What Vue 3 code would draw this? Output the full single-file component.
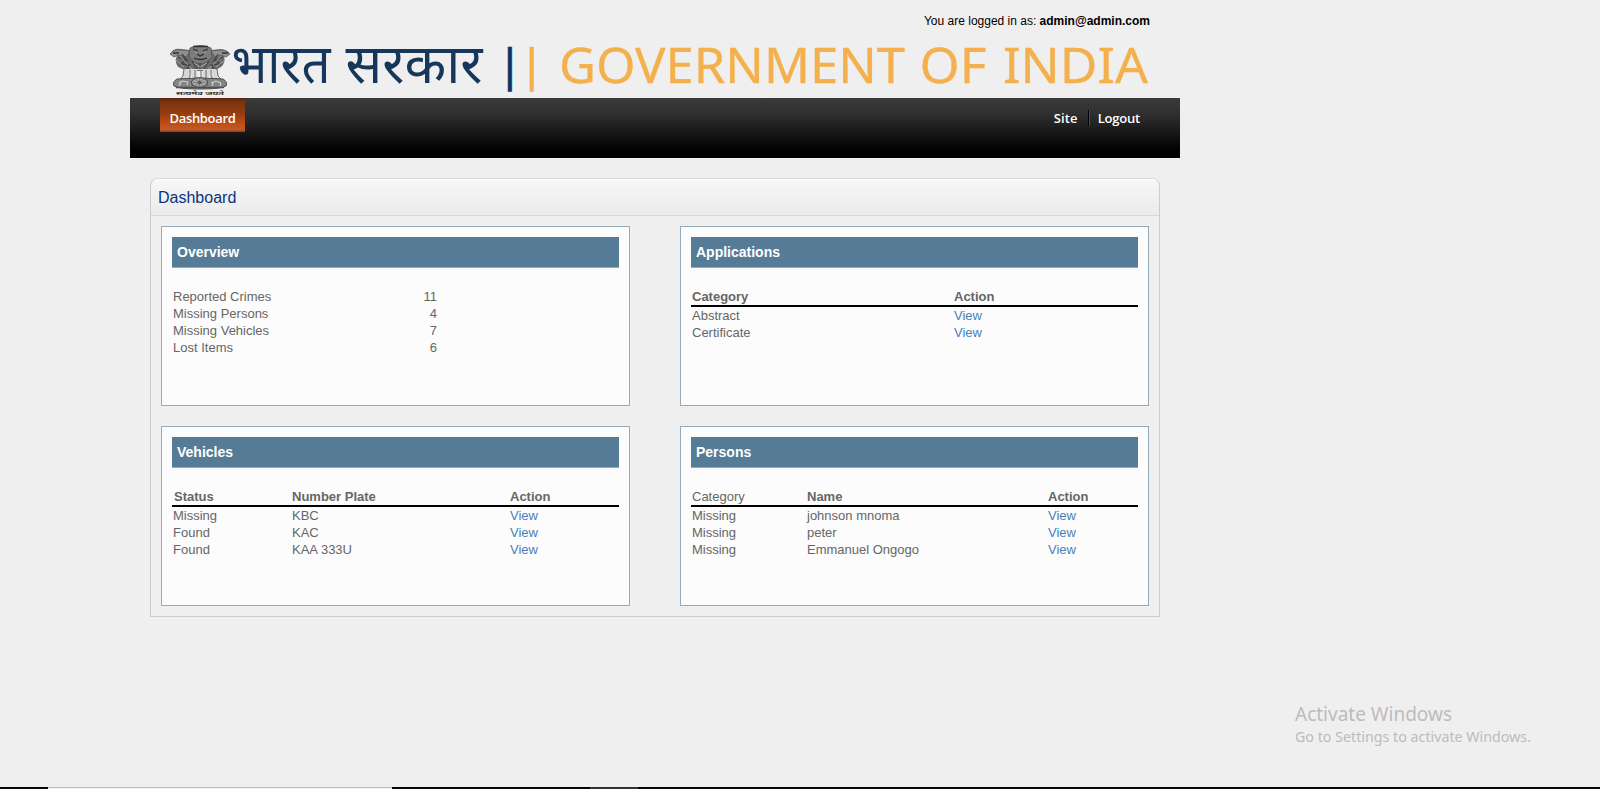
<script setup>
const cards = [
  {
    title: 'Overview',
    cols: [160, 106],
    width: 266,
    head: null,
    counts: true,
    rows: [
      ['Reported Crimes', '11'],
      ['Missing Persons', '4'],
      ['Missing Vehicles', '7'],
      ['Lost Items', '6'],
    ],
  },
  {
    title: 'Applications',
    cols: [262, 185],
    width: 447,
    head: ['Category', 'Action'],
    rows: [
      ['Abstract', 'View'],
      ['Certificate', 'View'],
    ],
  },
  {
    title: 'Vehicles',
    cols: [119, 218, 110],
    width: 447,
    head: [' Status', 'Number Plate', 'Action'],
    rows: [
      ['Missing', 'KBC', 'View'],
      ['Found', 'KAC', 'View'],
      ['Found', 'KAA 333U', 'View'],
    ],
  },
  {
    title: 'Persons',
    cols: [115, 241, 91],
    width: 447,
    head: ['Category', 'Name', 'Action'],
    lightFirst: true,
    rows: [
      ['Missing', 'johnson mnoma', 'View'],
      ['Missing', 'peter', 'View'],
      ['Missing', 'Emmanuel Ongogo', 'View'],
    ],
  },
]
</script>

<template>
  <div class="page">
    <div class="wrap">
      <header class="top">
        <p class="login">You are logged in as: <b>admin@admin.com</b></p>
        <svg class="banner" width="1050" height="60" viewBox="130 38 1050 60">
          <!-- Lion capital -->
          <g>
            <path d="M170 54 Q173 48 181 49 L190 50 Q192 45 200 46 Q209 45 211 50 L221 49 Q228 50 230 54 L224 56 Q226 63 221 67 L214 71 L187 71 L178 67 Q174 61 177 56Z" fill="#6c6c6c" />
            <path d="M170 54 Q174 49 181 50 L190 51 L186 57 L179 55 L174 57Z M230 54 Q226 49 220 50 L211 51 L215 57 L221 55 L226 57Z" fill="#909090" stroke="#5a5a5a" stroke-width=".8" />
            <path d="M190 48 Q200 43 211 48 L212 57 Q206 64 200 64 Q193 63 189 57Z" fill="#7c7c7c" stroke="#505050" stroke-width=".8" />
            <path d="M193 46.500 H208 M193 49 L198 51 M203 51 L208 49 M197 54 L200 56 L204 54 M194 58 Q200 61 207 58 M173 53 L179 53 M222 53 L228 53" fill="none" stroke="#303030" stroke-width="1.3" />
            <path d="M178 57 L186 60 L181 64 L190 65 L186 70 M223 57 L215 60 L220 64 L211 65 L215 70 M192 61 L197 69 M209 61 L204 69 M200 63 V70 M182 54 L188 62 M218 54 L213 62" fill="none" stroke="#444" stroke-width="1.3" />
            <path d="M180 56 L188 65 M176 60 L184 67 M221 56 L213 65 M225 60 L216 67 M194 63 L200 67 L207 63 M189 66 L193 70 M212 66 L207 70 M195 52 L197 53 M204 53 L206 52" fill="none" stroke="#a8a8a8" stroke-width=".9" />
            <path d="M184 69 L182 79 H189 L190 70 L193 80 H198 L197 70 L203 70 L202 80 H208 L211 70 L212 79 H219 L216 69Z" fill="#d8d8d8" />
            <path d="M184 69 L183 76 L180 79 H187 M190 70 V77 L188 79 M195 70 V78 L192 80 H198 M201 70 V79 M206 70 V78 L209 80 H203 M211 70 V77 L214 79 M217 69 L218 76 L221 79 H214" fill="none" stroke="#6a6a6a" stroke-width="1" />
            <path d="M177 79 Q200 77 223 79 Q228 82 226 86 Q222 89 200 89 Q179 89 174 86 Q172 82 177 79Z" fill="#858585" stroke="#505050" stroke-width="1" />
            <ellipse cx="199.500" cy="82.500" rx="8" ry="4.800" fill="#a6a6a6" stroke="#4a4a4a" stroke-width="1.1" />
            <circle cx="199.500" cy="82.500" r="1.800" fill="#444" />
            <path d="M193 82.500 H206 M199.500 78 V87 M195 79 L204 86 M204 79 L195 86" stroke="#666" stroke-width=".6" />
            <path d="M179 83 L182 81 L188 82 M179 86 L181 83 M187 85 L188 82 M211 83 L216 81 L221 83 M212 86 L213 83 M220 86 L221 83" fill="none" stroke="#d0d0d0" stroke-width="1.1" />
            <path d="M176 87.500 H224" stroke="#505050" stroke-width="1.3" />
            <text class="motto" x="176" y="94.500" textLength="48" lengthAdjust="spacingAndGlyphs">सत्यमेव जयते</text>
          </g>
          <g class="hindi">
            <text x="231.500" y="82.500" textLength="99" lengthAdjust="spacingAndGlyphs">भारत</text>
            <text x="345.500" y="82.500" textLength="137" lengthAdjust="spacingAndGlyphs">सरकार</text>
          </g>
          <text class="bar navy" x="502.300" y="81">|</text>
          <text class="bar amber" x="524.300" y="81">|</text>
          <g class="latin">
            <text x="559" y="83" textLength="346" lengthAdjust="spacingAndGlyphs">GOVERNMENT</text>
            <text x="919.500" y="83" textLength="67" lengthAdjust="spacingAndGlyphs">OF</text>
            <text x="1003" y="83" textLength="145" lengthAdjust="spacingAndGlyphs">INDIA</text>
          </g>
        </svg>
      </header>

      <nav class="nav">
        <a class="tab">Dashboard</a>
        <div class="links">
          <a class="link site">Site</a>
          <i class="sep"></i>
          <a class="link">Logout</a>
        </div>
      </nav>

      <main class="panel">
        <h1 class="title">Dashboard</h1>
        <div class="grid">
          <section v-for="card in cards" :key="card.title" class="card">
            <h2 class="caption">{{ card.title }}</h2>
            <table class="table" :style="{ width: card.width + 'px' }">
              <colgroup>
                <col v-for="(w, i) in card.cols" :key="i" :style="{ width: w + 'px' }" />
              </colgroup>
              <thead v-if="card.head">
                <tr>
                  <th
                    v-for="(h, i) in card.head"
                    :key="h"
                    :class="{ light: card.lightFirst && i === 0, indent: h.startsWith(' ') }"
                  >{{ h.trim() }}</th>
                </tr>
              </thead>
              <tbody>
                <tr v-for="(row, r) in card.rows" :key="r">
                  <td v-for="(cell, c) in row" :key="c" :class="{ num: card.counts && c === 1 }">
                    <a v-if="cell === 'View'" class="view">{{ cell }}</a>
                    <template v-else>{{ cell }}</template>
                  </td>
                </tr>
              </tbody>
            </table>
          </section>
        </div>
      </main>
    </div>

    <svg class="activate" width="260" height="60" viewBox="1290 695 260 60">
      <text class="big" x="1295" y="721" textLength="157" lengthAdjust="spacingAndGlyphs">Activate Windows</text>
      <text class="small" x="1295" y="742" textLength="236" lengthAdjust="spacingAndGlyphs">Go to Settings to activate Windows.</text>
    </svg>

    <div class="taskbar">
      <i class="active"></i>
      <i class="hover"></i>
    </div>
  </div>
</template>

<style>
body {
  background: #efefef;
}
</style>

<style scoped>
.page {
  position: relative;
  box-sizing: border-box;
  height: 789px;
  display: flex;
  flex-direction: column;
  justify-content: space-between;
  background: #efefef;
  font-family: "Liberation Sans", Arial, sans-serif;
  color: #666;
}
.wrap {
  width: 1050px;
  margin-left: 130px;
}
.top {
  height: 98px;
}
.login {
  box-sizing: border-box;
  height: 38px;
  margin: 0;
  padding: 14px 30px 0 0;
  text-align: right;
  font-size: 12px;
  line-height: 14px;
  color: #000;
}
.banner {
  display: block;
  overflow: visible;
}
.motto {
  font: bold 5px "Noto Sans", "Noto Sans Devanagari", sans-serif;
  fill: #333;
}
.hindi {
  font: 54px "Noto Sans", "Noto Sans Devanagari", sans-serif;
  fill: #16365c;
}
.bar {
  font: 45px "DejaVu Sans", sans-serif;
}
.navy {
  fill: #0b3663;
  stroke: #0b3663;
  stroke-width: 0.4;
}
.amber,
.latin {
  fill: #f4b04d;
  stroke: #f4b04d;
  stroke-width: 0.3;
}
.latin {
  font: 48.5px "Noto Sans", sans-serif;
}
.nav {
  box-sizing: border-box;
  height: 60px;
  padding: 0 30px;
  display: flex;
  justify-content: space-between;
  background: linear-gradient(#3a3a3a 0, #303030 25%, #1a1a1a 55%, #020202 85%, #000 100%);
  font: 600 13px/41px "Open Sans", "Noto Sans", sans-serif;
  letter-spacing: -0.35px;
  color: #fff;
}
.tab {
  width: 85px;
  height: 34px;
  text-align: center;
  background: linear-gradient(#5c2307 0, #7a3310 12%, #953d10 45%, #bd4d15 75%, #c25a28 92%, #86401f 100%);
}
.links {
  display: flex;
  padding-right: 10px;
  letter-spacing: -0.2px;
}
.site {
  letter-spacing: 0.1px;
}
.sep {
  width: 1px;
  height: 16px;
  margin: 12px 8px 0 10px;
  background: #4a4a4a;
  border-left: 1px solid #000;
}
.panel {
  box-sizing: border-box;
  width: 1010px;
  height: 439px;
  margin: 20px 0 0 20px;
  border: 1px solid #ccc;
  border-top-color: #d9d9d9;
  border-radius: 8px 8px 0 0;
}
.title {
  box-sizing: border-box;
  height: 37px;
  margin: 0;
  padding: 1px 7px 0;
  border-bottom: 1px solid #d6d6d6;
  border-radius: 7px 7px 0 0;
  background: linear-gradient(#fff 0, #f6f6f6 8%, #ebebeb 100%);
  font-size: 16px;
  font-weight: normal;
  line-height: 36px;
  color: #0b3480;
}
.grid {
  display: grid;
  grid-template-columns: 469px 469px;
  grid-template-rows: 180px 180px;
  gap: 20px 50px;
  padding: 10px 10px 0;
}
.card {
  box-sizing: border-box;
  padding: 10px;
  border: 1px solid #93abb9;
  background: #fcfcfc;
}
.caption {
  height: 30px;
  margin: 0 0 20px;
  padding-left: 5px;
  border-bottom: 1px solid #93abb9;
  background: #557b96;
  font-size: 14px;
  line-height: 30px;
  color: #fff;
}
.table {
  table-layout: fixed;
  border-collapse: collapse;
  font-size: 13px;
  line-height: 15px;
}
th,
td {
  padding: 1px;
  text-align: left;
  white-space: nowrap;
}
thead {
  border-bottom: 2px solid #000;
}
.light {
  font-weight: normal;
}
.indent {
  padding-left: 2px;
}
.num {
  text-align: right;
}
.view {
  color: #4a7ebb;
}
.activate {
  position: absolute;
  left: 1290px;
  top: 695px;
  font-family: "Noto Sans", "Open Sans", sans-serif;
  fill: #bcbcbc;
}
.big {
  font-size: 19.5px;
}
.small {
  font-size: 14.5px;
}
.taskbar {
  height: 2px;
  display: flex;
  background: #080408;
}
.active {
  box-sizing: border-box;
  width: 344px;
  margin-left: 48px;
  border-top: 1px solid #bbb;
  background: #f4f4f4;
}
.hover {
  width: 48px;
  margin-left: 198px;
  background: #333;
}
</style>
